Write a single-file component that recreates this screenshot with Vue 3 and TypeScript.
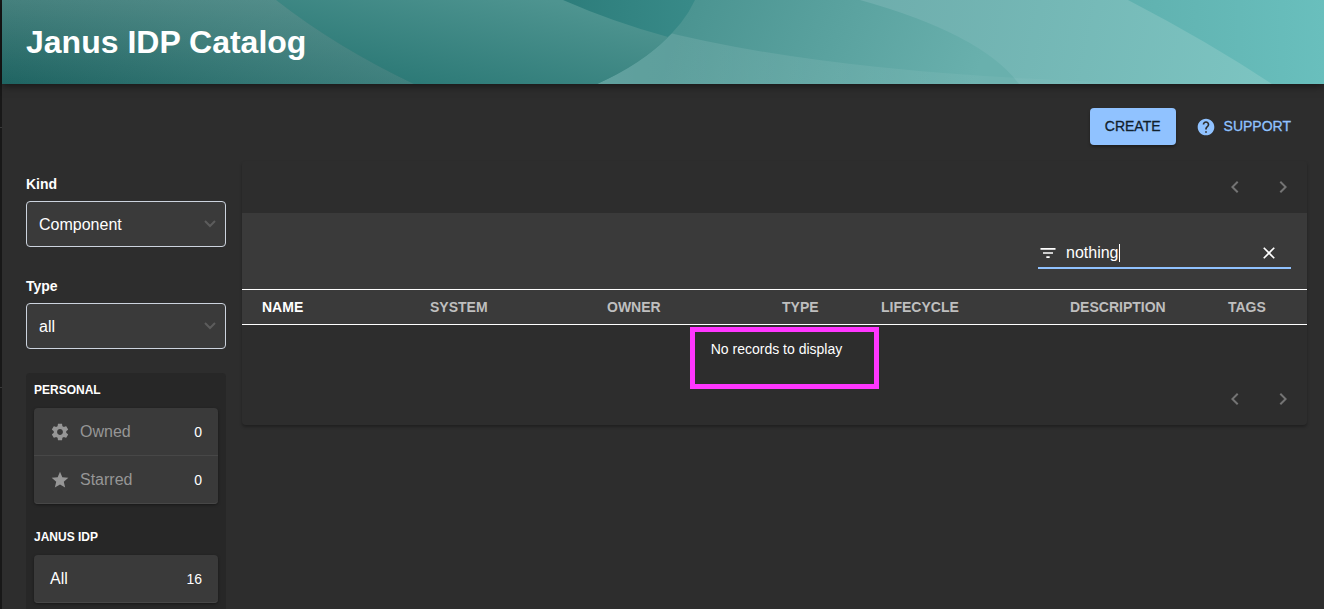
<script setup lang="ts">
import { ref } from 'vue'

interface Column { label: string; width: number; sorted?: boolean }
interface FilterItem { label: string; count: number; icon?: string }

const columns: Column[] = [
  { label: 'NAME', width: 168, sorted: true },
  { label: 'SYSTEM', width: 177 },
  { label: 'OWNER', width: 175 },
  { label: 'TYPE', width: 99 },
  { label: 'LIFECYCLE', width: 189 },
  { label: 'DESCRIPTION', width: 158 },
  { label: 'TAGS', width: 99 },
]
const total = columns.reduce((sum, c) => sum + c.width, 0)

const gear =
  'M19.43 12.98c.04-.32.07-.64.07-.98s-.03-.66-.07-.98l2.11-1.65c.19-.15.24-.42.12-.64l-2-3.46c-.12-.22-.39-.3-.61-.22l-2.49 1c-.52-.4-1.08-.73-1.69-.98l-.38-2.65C14.46 2.18 14.25 2 14 2h-4c-.25 0-.46.18-.49.42l-.38 2.65c-.61.25-1.17.59-1.69.98l-2.49-1c-.23-.09-.49 0-.61.22l-2 3.46c-.13.22-.07.49.12.64l2.11 1.65c-.04.32-.07.65-.07.98s.03.66.07.98l-2.11 1.65c-.19.15-.24.42-.12.64l2 3.46c.12.22.39.3.61.22l2.49-1c.52.4 1.08.73 1.69.98l.38 2.65c.03.24.24.42.49.42h4c.25 0 .46-.18.49-.42l.38-2.65c.61-.25 1.17-.59 1.69-.98l2.49 1c.23.09.49 0 .61-.22l2-3.46c.12-.22.07-.49-.12-.64l-2.11-1.65zM12 15.5c-1.93 0-3.5-1.57-3.5-3.5s1.57-3.5 3.5-3.5 3.5 1.57 3.5 3.5-1.57 3.5-3.5 3.5z'
const star = 'M12 17.27L18.18 21l-1.64-7.03L22 9.24l-7.19-.61L12 2 9.19 8.63 2 9.24l5.46 4.73L5.82 21z'

const groups: { title: string; items: FilterItem[] }[] = [
  {
    title: 'PERSONAL',
    items: [
      { label: 'Owned', count: 0, icon: gear },
      { label: 'Starred', count: 0, icon: star },
    ],
  },
  { title: 'JANUS IDP', items: [{ label: 'All', count: 16 }] },
]

const selects = [
  { id: 'kind', label: 'Kind', value: 'Component' },
  { id: 'type', label: 'Type', value: 'all' },
]
const query = ref('nothing')
</script>

<template>
  <div class="page">
    <header class="banner">
      <svg class="waves" viewBox="0 0 1322 84" preserveAspectRatio="none" aria-hidden="true">
        <defs>
          <linearGradient id="g-right" x1="0" x2="1"><stop offset="0.84" stop-color="#5fb0ae" /><stop offset="1" stop-color="#69bfbd" /></linearGradient>
          <linearGradient id="g-pale" gradientUnits="userSpaceOnUse" x1="860" y1="0" x2="1260" y2="84"><stop offset="0" stop-color="#6eadac" /><stop offset="1" stop-color="#7cc4c1" /></linearGradient>
          <linearGradient id="g-arc" gradientUnits="userSpaceOnUse" x1="690" y1="0" x2="960" y2="110"><stop offset="0" stop-color="#4b9491" /><stop offset="1" stop-color="#69b0ad" /></linearGradient>
          <linearGradient id="g-low" gradientUnits="userSpaceOnUse" x1="600" y1="0" x2="1200" y2="0"><stop offset="0" stop-color="#fff" stop-opacity="0.12" /><stop offset="1" stop-color="#fff" stop-opacity="0" /></linearGradient>
          <linearGradient id="g-deep" gradientUnits="userSpaceOnUse" x1="560" y1="0" x2="690" y2="0"><stop offset="0" stop-color="#2d7d7b" /><stop offset="1" stop-color="#388a88" /></linearGradient>
          <linearGradient id="g-mid" gradientUnits="userSpaceOnUse" x1="414" y1="84" x2="438" y2="-24"><stop offset="0" stop-color="#2d7a77" /><stop offset="1" stop-color="#4e9490" /></linearGradient>
          <linearGradient id="g-left" x1="0" y1="0" x2="0" y2="1"><stop offset="0" stop-color="#45807d" /><stop offset="1" stop-color="#1f6462" /></linearGradient>
          <linearGradient id="g-edge" gradientUnits="userSpaceOnUse" x1="0" y1="0" x2="410" y2="0"><stop offset="0" stop-color="#7fb8b5" stop-opacity="0" /><stop offset="1" stop-color="#7fb8b5" stop-opacity="0.34" /></linearGradient>
        </defs>
        <path fill="url(#g-right)" d="M0 0H1322V84H0z" />
        <path fill="url(#g-pale)" d="M0 0H1126Q1205 41 1270 84H0z" />
        <path fill="url(#g-arc)" d="M0 0H858Q980 34 1017 84H0z" />
        <path fill="url(#g-low)" d="M561 0Q760 79 1200 84H561z" />
        <path fill="url(#g-deep)" d="M0 0H693Q671 48 595 84H0z" />
        <path fill="url(#g-mid)" d="M0 0H561Q611 22 666 37Q640 64 595 84H0z" />
        <path fill="url(#g-left)" d="M0 0H274Q334 47 412 84H0z" />
        <path fill="url(#g-edge)" d="M0 0H274Q334 47 412 84H0z" />
      </svg>
      <h1>Janus IDP Catalog</h1>
    </header>

    <main class="content">
      <div class="actions">
        <button class="create" type="button">CREATE</button>
        <button class="support" type="button">
          <svg class="icon" viewBox="0 0 24 24" aria-hidden="true"><path d="M12 2C6.48 2 2 6.48 2 12s4.48 10 10 10 10-4.480 10-10S17.520 2 12 2zm1 17h-2v-2h2v2zm2.070-7.750l-.9.920C13.450 12.900 13 13.500 13 15h-2v-.5c0-1.100.45-2.100 1.170-2.830l1.240-1.260c.37-.36.59-.86.59-1.410 0-1.100-.9-2-2-2s-2 .9-2 2H8c0-2.210 1.790-4 4-4s4 1.790 4 4c0 .88-.36 1.680-.93 2.250z" /></svg>
          <span>SUPPORT</span>
        </button>
      </div>

      <div class="columns">
        <aside class="filters">
          <div v-for="s in selects" :key="s.id" class="field">
            <label :for="s.id">{{ s.label }}</label>
            <div class="select-box">
              <select :id="s.id"><option>{{ s.value }}</option></select>
              <svg class="arrow" viewBox="0 0 12 8" aria-hidden="true"><path d="M1 1l5 5 5-5" fill="none" stroke="#5c5c5c" stroke-width="2" /></svg>
            </div>
          </div>

          <div class="picker">
            <section v-for="g in groups" :key="g.title">
              <h2>{{ g.title }}</h2>
              <ul>
                <li v-for="item in g.items" :key="item.label">
                  <button type="button" :class="['item', { empty: !item.count }]" :disabled="!item.count">
                    <svg v-if="item.icon" class="icon" viewBox="0 0 24 24" aria-hidden="true"><path :d="item.icon" /></svg>
                    <span class="name">{{ item.label }}</span>
                    <span class="count">{{ item.count }}</span>
                  </button>
                </li>
              </ul>
            </section>
          </div>
        </aside>

        <section class="card">
          <div class="pager">
            <button type="button" disabled aria-label="Previous page"><svg class="icon" viewBox="0 0 24 24"><path d="M15.410 7.410L14 6l-6 6 6 6 1.410-1.410L10.830 12z" /></svg></button>
            <button type="button" disabled aria-label="Next page"><svg class="icon" viewBox="0 0 24 24"><path d="M10 6L8.590 7.410 13.170 12l-4.580 4.590L10 18l6-6z" /></svg></button>
          </div>
          <div class="toolbar">
            <div class="search">
              <svg class="icon" viewBox="0 0 24 24" aria-hidden="true"><path d="M10 18h4v-2h-4v2zM3 6v2h18V6H3zm3 7h12v-2H6v2z" /></svg>
              <div class="entry">
                <input v-model="query" type="text" aria-label="Filter" />
                <span class="caret"></span>
              </div>
              <button type="button" aria-label="Clear filter" @click="query = ''"><svg class="icon" viewBox="0 0 24 24"><path d="M19 6.410L17.590 5 12 10.590 6.410 5 5 6.410 10.590 12 5 17.590 6.410 19 12 13.410 17.590 19 19 17.590 13.410 12z" /></svg></button>
            </div>
          </div>
          <table>
            <colgroup>
              <col v-for="c in columns" :key="c.label" :style="{ width: (c.width / total) * 100 + '%' }" />
            </colgroup>
            <thead>
              <tr><th v-for="c in columns" :key="c.label" scope="col" :class="{ sorted: c.sorted }">{{ c.label }}</th></tr>
            </thead>
            <tbody>
              <tr><td :colspan="columns.length">No records to display<span class="highlight"></span></td></tr>
            </tbody>
          </table>
          <div class="pager">
            <button type="button" disabled aria-label="Previous page"><svg class="icon" viewBox="0 0 24 24"><path d="M15.410 7.410L14 6l-6 6 6 6 1.410-1.410L10.830 12z" /></svg></button>
            <button type="button" disabled aria-label="Next page"><svg class="icon" viewBox="0 0 24 24"><path d="M10 6L8.590 7.410 13.170 12l-4.580 4.590L10 18l6-6z" /></svg></button>
          </div>
        </section>
      </div>
    </main>
  </div>
</template>

<style>
body {
  margin: 0;
  background: #2d2d2d;
}
</style>

<style scoped>
* {
  box-sizing: border-box;
}
.page {
  height: 100vh;
  overflow: hidden;
  padding-left: 2px;
  background:
    linear-gradient(#383838, #383838) 0 127px / 2px 1px no-repeat,
    linear-gradient(#383838, #383838) 0 387px / 2px 1px no-repeat,
    linear-gradient(#181818, #181818) 0 0 / 2px 100% no-repeat,
    #2d2d2d;
  color: #fff;
  font-family: "Liberation Sans", Arial, sans-serif;
  font-size: 14px;
  line-height: 20px;
}
button,
input,
select {
  margin: 0;
  padding: 0;
  border: 0;
  background: none;
  color: inherit;
  font: inherit;
}
.icon {
  display: block;
  flex: none;
  width: 20px;
  height: 20px;
  fill: currentColor;
}
.banner {
  position: relative;
  display: flex;
  align-items: center;
  height: 84px;
  padding: 0 24px;
  box-shadow: 0 2px 8px rgba(0, 0, 0, 0.5);
}
.waves {
  position: absolute;
  inset: 0;
  width: 100%;
  height: 100%;
}
h1 {
  position: relative;
  margin: 0;
  font-size: 32px;
  line-height: 40px;
}
.content {
  padding: 24px 17px 0 24px;
}
.actions {
  display: flex;
  justify-content: flex-end;
  gap: 12px;
  padding-right: 16px;
}
.create,
.support {
  font-weight: 500;
  -webkit-text-stroke: 0.3px currentColor;
}
.create {
  height: 37px;
  padding: 0 15px 2px;
  border-radius: 4px;
  background: #90c2ff;
  color: #10202c;
  box-shadow: 0 2px 3px rgba(0, 0, 0, 0.35);
}
.support {
  display: flex;
  align-items: center;
  gap: 8px;
  padding-left: 8px;
  color: #90c2ff;
}
.support span {
  padding-bottom: 2px;
}
.columns {
  display: grid;
  grid-template-columns: 200px minmax(0, 1fr);
  gap: 16px;
  align-items: start;
  margin-top: 16px;
}
.filters {
  padding-top: 13px;
}
.field {
  margin-bottom: 29px;
}
.field + .picker {
  margin-top: -5px;
}
.field label {
  display: block;
  margin-bottom: 7px;
  font-weight: 700;
}
.select-box {
  position: relative;
}
select {
  appearance: none;
  display: block;
  width: 100%;
  height: 46px;
  padding: 1px 32px 0 12px;
  border: 1px solid #ccd3de;
  border-radius: 4px;
  background: #3a3a3a;
  font-size: 16px;
}
.arrow {
  position: absolute;
  top: 19px;
  right: 10px;
  width: 12px;
  height: 8px;
  pointer-events: none;
}
.picker {
  padding: 9px 8px 1px;
  border-radius: 4px;
  background: #272727;
}
h2 {
  margin: 0;
  font-size: 12px;
  line-height: 16px;
}
ul {
  margin: 10px 0 25px;
  padding: 0;
  border-radius: 4px;
  background: #3a3a3a;
  list-style: none;
  box-shadow: 0 1px 3px rgba(0, 0, 0, 0.4);
}
li {
  border-bottom: 1px solid #474747;
}
li:last-child {
  border-radius: 4px;
}
.item {
  display: flex;
  align-items: center;
  gap: 10px;
  width: 100%;
  height: 47px;
  padding: 0 16px;
  text-align: left;
}
.name {
  flex: 1;
  font-size: 16px;
}
.empty .icon,
.empty .name {
  color: #969696;
}
.card {
  border-radius: 4px;
  box-shadow: 0 2px 3px rgba(0, 0, 0, 0.3);
}
.pager {
  display: flex;
  justify-content: flex-end;
  height: 52px;
  color: #747474;
}
.pager button {
  display: grid;
  place-items: center;
  width: 48px;
}
.pager .icon {
  width: 24px;
  height: 24px;
}
.toolbar {
  display: flex;
  justify-content: flex-end;
  height: 76px;
  padding: 26px 16px 20px;
  background: #3a3a3a;
}
.search {
  display: flex;
  align-items: center;
  width: 253px;
  padding-right: 12px;
  border-bottom: 2px solid #90c2ff;
}
.entry {
  position: relative;
  flex: 1;
  min-width: 0;
  margin-left: 8px;
}
.entry input {
  display: block;
  width: 100%;
  height: 20px;
  outline: 0;
  font-size: 16px;
}
.caret {
  position: absolute;
  top: 1px;
  left: 53px;
  width: 1px;
  height: 18px;
  background: #fff;
}
table {
  width: 100%;
  border-collapse: separate;
  border-spacing: 0;
  table-layout: fixed;
}
th {
  height: 36px;
  padding: 0 0 0 20px;
  border-top: 1px solid #fff;
  border-bottom: 1px solid #fff;
  background: #3a3a3a;
  color: #bfbfbf;
  text-align: left;
}
th.sorted {
  color: #fff;
}
td {
  position: relative;
  height: 48px;
  padding: 0 20px 0 24px;
  text-align: center;
}
.highlight {
  position: absolute;
  top: 2px;
  left: calc(50% - 85px);
  z-index: 1;
  width: 189px;
  height: 62px;
  border: 5px solid #ff36ff;
  pointer-events: none;
}
</style>
